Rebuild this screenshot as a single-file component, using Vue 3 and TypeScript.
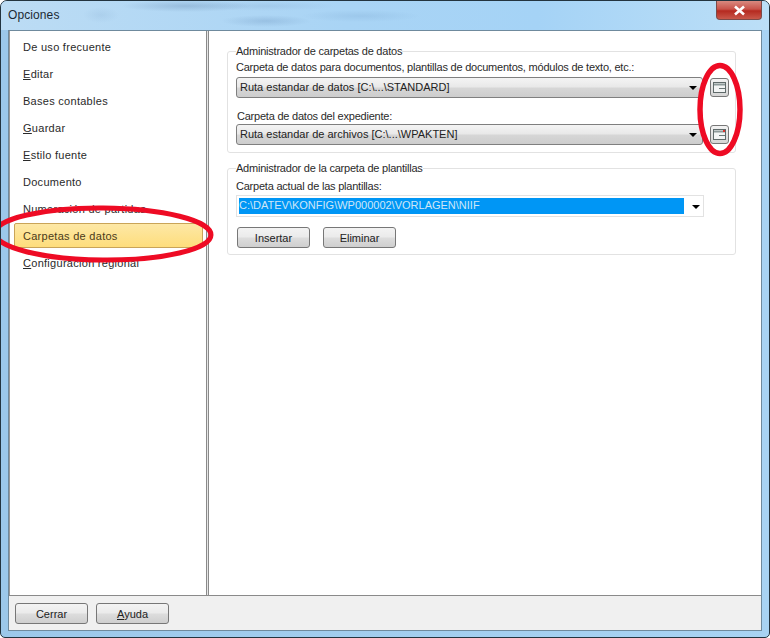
<script setup lang="ts">
const items = [
  { pre: 'De uso frecuente', u: '', post: '' },
  { pre: '', u: 'E', post: 'ditar' },
  { pre: 'Bases contables', u: '', post: '' },
  { pre: '', u: 'G', post: 'uardar' },
  { pre: '', u: 'E', post: 'stilo fuente' },
  { pre: 'Documento', u: '', post: '' },
  { pre: 'Numeración de partidas', u: '', post: '' },
  { pre: 'Carpetas de datos', u: '', post: '', active: true },
  { pre: '', u: 'C', post: 'onfiguración regional' },
]
</script>

<template>
  <div class="window">
    <header class="titlebar">
      <span class="title">Opciones</span>
      <button class="close" type="button">
        <svg width="13" height="11" viewBox="0 0 13 11"><path d="M2 1.5 L11 9.5 M11 1.5 L2 9.5" stroke="#fff" stroke-width="2.6" /></svg>
      </button>
    </header>
    <div class="client">
      <div class="main">
        <nav class="nav">
          <div v-for="(it, i) in items" :key="i" class="nav-item" :class="{ active: it.active }">
            <span>{{ it.pre }}<u v-if="it.u">{{ it.u }}</u>{{ it.post }}</span>
          </div>
        </nav>
        <section class="pane">
          <fieldset class="group first">
            <legend>Administrador de carpetas de datos</legend>
            <div class="label">Carpeta de datos para documentos, plantillas de documentos, módulos de texto, etc.:</div>
            <div class="row">
              <div class="combo">Ruta estandar de datos [C:\...\STANDARD]<i class="arrow"></i></div>
              <button class="browse" type="button">
                <svg width="15" height="13" viewBox="0 0 15 13"><rect x="1.5" y="1.5" width="12" height="10" fill="#f2f4f4" stroke="#5f6a6a" /><path d="M2 3.5H13" stroke="#8d9a9a" stroke-width="2" /><path d="M7 7.5H13" stroke="#6a7676" /></svg>
              </button>
            </div>
            <div class="label second">Carpeta de datos del expediente:</div>
            <div class="row close-row">
              <div class="combo">Ruta estandar de archivos [C:\...\WPAKTEN]<i class="arrow"></i></div>
              <button class="browse" type="button">
                <svg width="15" height="13" viewBox="0 0 15 13"><rect x="1.5" y="1.5" width="12" height="10" fill="#f2f4f4" stroke="#5f6a6a" /><path d="M2 3.5H13" stroke="#8d9a9a" stroke-width="2" /><path d="M7 7.5H13" stroke="#6a7676" /><rect x="11" y="2" width="2" height="2" fill="#d8332f" /></svg>
              </button>
            </div>
          </fieldset>
          <fieldset class="group">
            <legend>Administrador de la carpeta de plantillas</legend>
            <div class="label tpl">Carpeta actual de las plantillas:</div>
            <div class="select">
              <span class="selected">C:\DATEV\KONFIG\WP000002\VORLAGEN\NIIF</span>
              <i class="arrow"></i>
            </div>
            <div class="actions">
              <button class="btn" type="button">Insertar</button>
              <button class="btn" type="button">Eliminar</button>
            </div>
          </fieldset>
        </section>
      </div>
      <footer class="footer">
        <button class="btn" type="button">Cerrar</button>
        <button class="btn" type="button"><u>A</u>yuda</button>
      </footer>
    </div>
    <svg class="marks" width="770" height="638" viewBox="0 0 770 638">
      <ellipse cx="103" cy="234" rx="108" ry="26" transform="rotate(0.5 103 234)" fill="none" stroke="#ee0b24" stroke-width="5" />
      <ellipse cx="720" cy="109.5" rx="20" ry="44" fill="none" stroke="#ee0b24" stroke-width="5.5" />
    </svg>
  </div>
</template>

<style>
html, body { margin: 0; background: #fff; }
</style>

<style scoped>
.window {
  position: relative;
  width: 770px;
  height: 638px;
  box-sizing: border-box;
  display: flex;
  flex-direction: column;
  overflow: hidden;
  background: linear-gradient(90deg, #9cc8ea 0, #a8d3f3 100%);
  border: 1px solid #23343f;
  border-radius: 7px 7px 5px 5px;
  font-family: "Liberation Sans", Arial, sans-serif;
  color: #222;
}
.titlebar {
  height: 29px;
  flex: none;
  display: flex;
  justify-content: space-between;
  align-items: flex-start;
  padding: 0 7px 0 7px;
  background:
    radial-gradient(ellipse 65px 6px at 185px 5px, rgba(90, 125, 165, 0.3), transparent),
    radial-gradient(ellipse 70px 5px at 265px 5px, rgba(110, 150, 190, 0.18), transparent),
    radial-gradient(ellipse 45px 6px at 265px 20px, rgba(90, 130, 175, 0.25), transparent),
    radial-gradient(ellipse 60px 6px at 360px 15px, rgba(100, 145, 190, 0.18), transparent),
    radial-gradient(ellipse 18px 8px at 100px 14px, rgba(110, 150, 190, 0.15), transparent),
    linear-gradient(90deg, #bcdcf4 0, #a9d4f5 45%, #a5d3f6 70%, #bcdff7 100%);
}
.title { font-size: 12px; line-height: 28px; color: #1c2a33; letter-spacing: 0.1px; }
.close {
  width: 46px;
  height: 19px;
  padding: 0;
  display: flex;
  align-items: center;
  justify-content: center;
  border: 1px solid #7c4a48;
  border-top: 0;
  border-radius: 0 0 4px 4px;
  background: linear-gradient(180deg, #d98a80 0, #c9534a 45%, #b52a20 55%, #c9584a 100%);
}
.client {
  flex: 1;
  min-height: 0;
  margin: 0 7px 6px 7px;
  display: flex;
  flex-direction: column;
  background: #f0f0f0;
  border: 1px solid #6f8a9d;
}
.main {
  flex: 1;
  min-height: 0;
  display: flex;
  background: #fff;
  border-bottom: 1px solid #8a8a8a;
}
.nav {
  width: 198px;
  flex: none;
  box-sizing: border-box;
  padding: 3px 3px 0 4px;
  border-right: 1px solid #8a8a8a;
  border-left: 1px solid #9a9a9a;
  box-shadow: 1px 0 0 #e6e6e6, 2px 0 0 #8a8a8a;
  font-size: 11px;
  letter-spacing: 0.28px;
  display: flex;
  flex-direction: column;
  gap: 2px;
}
.nav-item {
  height: 25px;
  line-height: 27px;
  padding-left: 9px;
  box-sizing: border-box;
  color: #2a2a2a;
  border-radius: 2px;
}
.nav-item.active {
  background: linear-gradient(180deg, #fde8a6 0, #fedd7c 100%);
  border: 1px solid #c9a458;
  padding-left: 8px;
  line-height: 25px;
  color: #4a3a1a;
}
.pane {
  flex: 1;
  min-width: 0;
  box-sizing: border-box;
  padding: 14px 25px 0 18px;
  margin-left: 2px;
  display: flex;
  flex-direction: column;
  gap: 9px;
}
.group {
  margin: 0;
  min-width: 0;
  padding: 0 0 0 8px;
  border: 1px solid #e2e2e2;
  border-radius: 3px;
  font-size: 11px;
}
.group.first { height: 108px; box-sizing: border-box; }
.group:not(.first) { height: 93px; box-sizing: border-box; }
legend { padding: 0; line-height: 13px; color: #2a2a2a; letter-spacing: -0.22px; }
.label { line-height: 14px; color: #2a2a2a; margin-top: 2px; height: 14px; letter-spacing: -0.22px; }
.label.second { margin-top: 11px; margin-left: 1px; height: 13px; }
.label.tpl { margin-top: 4px; height: 15px; }
.row { display: flex; align-items: center; gap: 7px; margin-top: 3px; height: 21px; }
.row.close-row { margin-top: 2px; }
.combo {
  width: 467px;
  height: 21px;
  flex: none;
  box-sizing: border-box;
  position: relative;
  padding-left: 3px;
  line-height: 19px;
  border: 1px solid #7f7f7f;
  border-radius: 3px;
  color: #222;
  background: linear-gradient(180deg, #f4f4f4 0, #e9e9e9 45%, #d6d6d6 55%, #cdcdcd 100%);
}
.arrow {
  position: absolute;
  right: 5px;
  top: 8px;
  width: 0;
  height: 0;
  border: 4px solid transparent;
  border-top: 4px solid #000;
  border-bottom: 0;
}
.browse {
  width: 19px;
  height: 19px;
  padding: 0;
  display: flex;
  align-items: center;
  justify-content: center;
  border: 1px solid #777;
  border-radius: 3px;
  background: linear-gradient(180deg, #f3f3f3, #d5d5d5);
}
.select {
  position: relative;
  width: 468px;
  height: 22px;
  margin-top: 1px;
  box-sizing: border-box;
  padding: 2px 19px 2px 2px;
  border: 1px solid #e2e2e2;
  background: #fff;
}
.select .arrow { top: 9px; right: 3px; }
.selected {
  display: block;
  height: 16px;
  line-height: 14px;
  background: #0096f5;
  color: #cfe6f7;
  white-space: nowrap;
  overflow: hidden;
}
.actions { display: flex; gap: 13px; margin-top: 10px; padding-left: 1px; }
.btn {
  width: 73px;
  height: 21px;
  padding: 0;
  font: inherit;
  font-size: 11px;
  color: #222;
  border: 1px solid #777;
  border-radius: 3px;
  background: linear-gradient(180deg, #f3f3f3 0, #ebebeb 45%, #dcdcdc 55%, #cfcfcf 100%);
}
.footer {
  height: 34px;
  flex: none;
  display: flex;
  align-items: flex-start;
  gap: 8px;
  padding: 7px 0 0 6px;
  box-sizing: border-box;
}
.marks { position: absolute; left: -1px; top: -1px; pointer-events: none; }
</style>
